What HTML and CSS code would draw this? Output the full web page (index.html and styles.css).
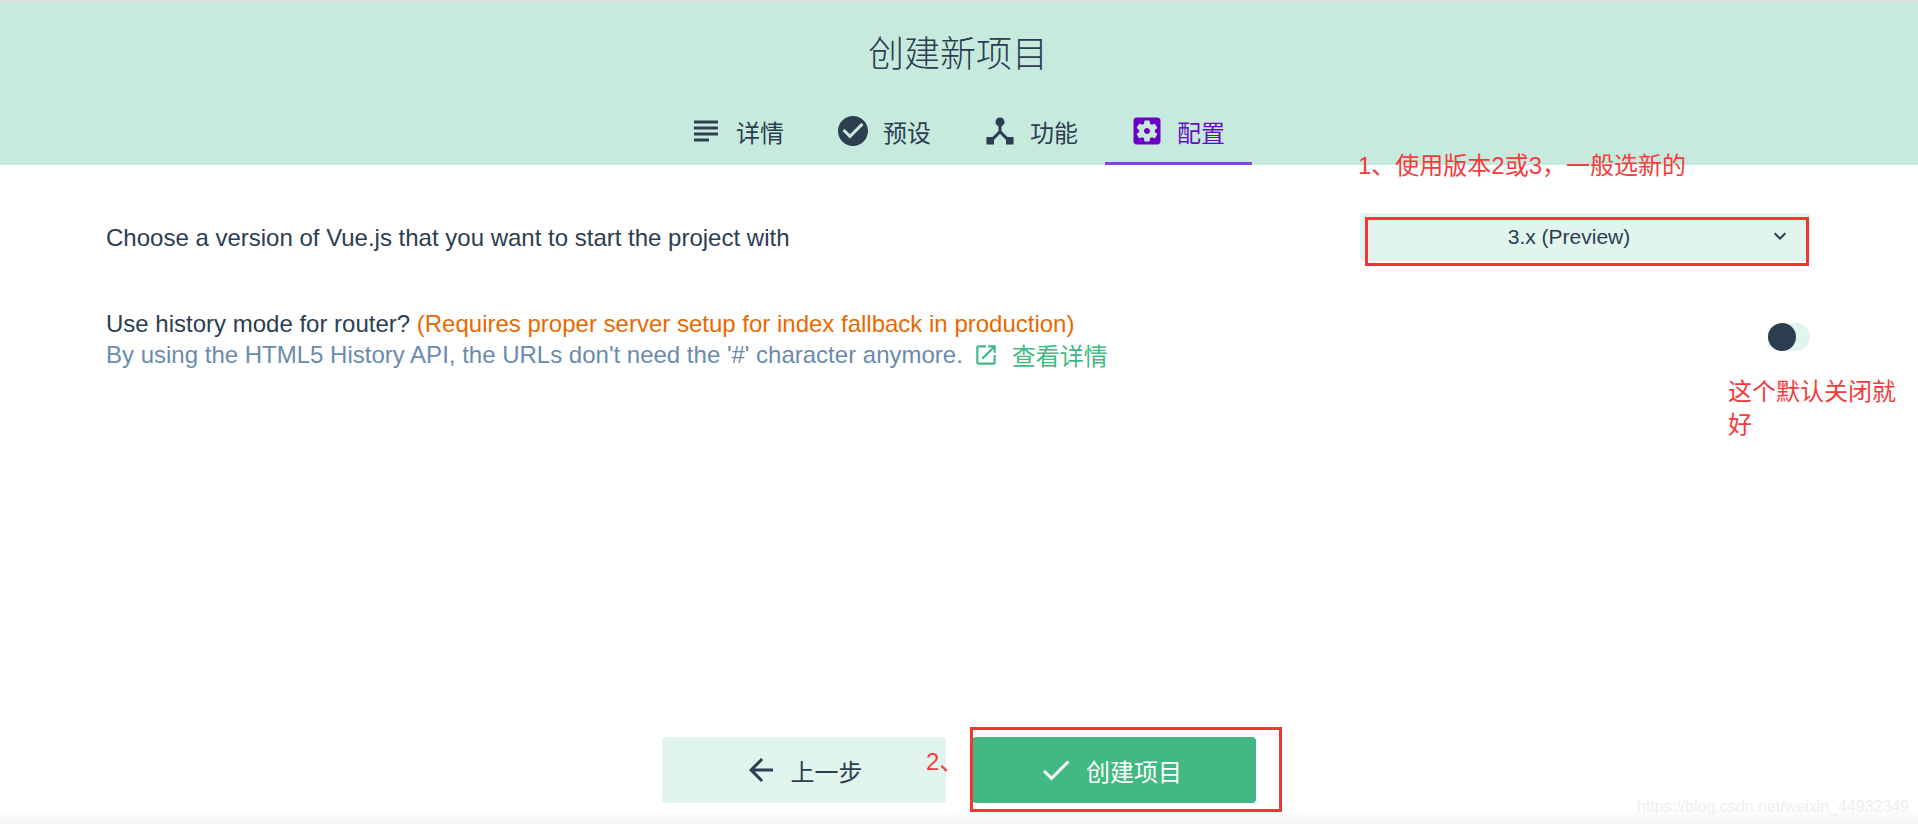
FILE: index.html
```html
<!DOCTYPE html>
<html lang="zh-CN">
<head>
    <meta charset="UTF-8">
    <title>创建新项目</title>
    <link rel="stylesheet" href="styles.css">
</head>
<body>
    <header class="top">
        <h1 class="title">创建新项目</h1>
        <nav class="tabs">
            <div class="tab">
                <svg class="tab-icon" viewBox="0 0 24 24"><path d="M14 17H4v2h10v-2zm6-8H4v2h16V9zM4 15h16v-2H4v2zM4 5v2h16V5H4z"/></svg>
                <span>详情</span>
            </div>
            <div class="tab">
                <svg class="tab-icon" viewBox="0 0 24 24"><path d="M12 2C6.48 2 2 6.48 2 12s4.48 10 10 10 10-4.48 10-10S17.52 2 12 2zm-2 15l-5-5 1.41-1.41L10 14.17l7.59-7.59L19 8l-9 9z"/></svg>
                <span>预设</span>
            </div>
            <div class="tab">
                <svg class="tab-icon" viewBox="0 0 24 24"><path d="M17 16l-4-4V8.82C14.16 8.4 15 7.3 15 6c0-1.66-1.34-3-3-3S9 4.34 9 6c0 1.3.84 2.4 2 2.82V12l-4 4H3v5h5v-3.05l4-4.2 4 4.2V21h5v-5h-4z"/></svg>
                <span>功能</span>
            </div>
            <div class="tab active">
                <svg class="tab-icon" viewBox="0 0 24 24"><path d="M12 10c-1.1 0-2 .9-2 2s.9 2 2 2 2-.9 2-2-.9-2-2-2zm7-7H5c-1.11 0-2 .9-2 2v14c0 1.1.89 2 2 2h14c1.11 0 2-.9 2-2V5c0-1.1-.89-2-2-2zm-1.75 9c0 .23-.02.46-.05.68l1.48 1.16c.13.11.17.3.08.45l-1.4 2.42c-.09.15-.27.21-.43.15l-1.74-.7c-.36.28-.76.51-1.18.69l-.26 1.85c-.03.17-.18.3-.35.3h-2.8c-.17 0-.32-.13-.35-.29l-.26-1.85c-.43-.18-.82-.41-1.18-.69l-1.74.7c-.16.06-.34 0-.43-.15l-1.4-2.42c-.09-.15-.05-.34.08-.45l1.48-1.16c-.03-.23-.05-.46-.05-.69 0-.23.02-.46.05-.68l-1.48-1.16c-.13-.11-.17-.3-.08-.45l1.4-2.42c.09-.15.27-.21.43-.15l1.74.7c.36-.28.76-.51 1.18-.69l.26-1.85c.03-.17.18-.3.35-.3h2.8c.17 0 .32.13.35.29l.26 1.85c.43.18.82.41 1.18.69l1.74-.7c.16-.06.34 0 .43.15l1.4 2.42c.09.15.05.34-.08.45l-1.48 1.16c.03.23.05.46.05.69z"/></svg>
                <span>配置</span>
            </div>
        </nav>
    </header>

    <main class="content">
        <div class="row row-version">
            <p class="prompt">Choose a version of Vue.js that you want to start the project with</p>
            <div class="select">
                <span>3.x (Preview)</span>
                <svg class="select-arrow" viewBox="0 0 24 24"><path d="M16.59 8.59L12 13.17 7.41 8.59 6 10l6 6 6-6z"/></svg>
            </div>
        </div>
        <div class="row row-history">
            <div>
                <p class="prompt">Use history mode for router? <span class="warn">(Requires proper server setup for index fallback in production)</span></p>
                <p class="desc">By using the HTML5 History API, the URLs don't need the '#' character anymore.
                    <a class="more">
                        <svg class="more-icon" viewBox="0 0 24 24"><path d="M19 19H5V5h7V3H5c-1.11 0-2 .9-2 2v14c0 1.1.89 2 2 2h14c1.1 0 2-.9 2-2v-7h-2v7zM14 3v2h3.59l-9.83 9.83 1.41 1.41L19 6.41V10h2V3h-7z"/></svg>
                        <span>查看详情</span>
                    </a>
                </p>
            </div>
            <div class="toggle"><div class="knob"></div></div>
        </div>
    </main>

    <footer class="actions">
        <button class="btn btn-prev">
            <svg class="btn-icon" viewBox="0 0 24 24"><path d="M20 11H7.83l5.59-5.59L12 4l-8 8 8 8 1.41-1.41L7.83 13H20v-2z"/></svg>
            <span>上一步</span>
        </button>
        <button class="btn btn-create">
            <svg class="btn-icon" viewBox="0 0 24 24"><path d="M9 16.2L4.8 12l-1.4 1.4L9 19 21 7l-1.4-1.4L9 16.2z"/></svg>
            <span>创建项目</span>
        </button>
    </footer>

    <!-- red notes drawn over the screenshot -->
    <div class="note note-1">1、使用版本2或3，一般选新的</div>
    <div class="note note-2">这个默认关闭就好</div>
    <div class="note note-3">2、</div>
    <div class="mark mark-select"></div>
    <div class="mark mark-create"></div>
    <div class="watermark">https://blog.csdn.net/weixin_44932349</div>
</body>
</html>
```

FILE: styles.css
```css
* {
    box-sizing: border-box;
}
html, body {
    height: 100%;
}
body {
    position: relative;
    margin: 0;
    height: 824px;
    overflow: hidden;
    display: flex;
    flex-direction: column;
    font-family: "Liberation Sans", "Noto Sans CJK SC", sans-serif;
    color: #2c3e50;
    background: #fff;
}
p {
    margin: 0;
}

.top {
    height: 165px;
    border-top: 2px solid #e0e0e0;
    background: #c7eade;
    display: flex;
    flex-direction: column;
    align-items: center;
}
.title {
    margin: 26px 2px 0 0;
    height: 47px;
    font-size: 36px;
    line-height: 47px;
    font-weight: 300;
    font-family: "Noto Sans CJK SC", sans-serif;
}
.tabs {
    display: flex;
    margin: 20px 2px 0 0;
}
.tab {
    width: 147px;
    height: 70px;
    padding: 2px 3px 0 0;
    display: flex;
    align-items: center;
    justify-content: center;
    gap: 12px;
    font-size: 24px;
    font-family: "Noto Sans CJK SC", sans-serif;
}
.tab-icon {
    width: 36px;
    height: 36px;
    fill: #2c3e50;
}
.tab.active {
    color: #6a0bc5;
    border-bottom: 3px solid #8646c8;
    padding-top: 5px;
}
.tab.active .tab-icon {
    fill: #6a00c4;
}

.content {
    flex: 1;
    padding: 48px 108px 0 106px;
}
.row {
    display: flex;
    justify-content: space-between;
}
.row-version {
    align-items: flex-start;
    height: 90px;
}
.prompt {
    font-size: 24px;
    line-height: 31px;
}
.row-version .prompt {
    margin-top: 9px;
}
.select {
    width: 450px;
    height: 48px;
    padding: 0 18px 0 10px;
    border-radius: 4px;
    background: #e2f4ee;
    display: flex;
    align-items: center;
    font-size: 21px;
}
.select span {
    flex: 1;
    text-align: center;
}
.select-arrow {
    width: 24px;
    height: 24px;
    margin-top: -2px;
    fill: #2c3e50;
}
.row-history {
    align-items: flex-start;
    padding-top: 5px;
}
.warn {
    color: #e96900;
}
.desc {
    display: flex;
    align-items: center;
    gap: 6px;
    font-size: 24px;
    line-height: 31px;
    color: #6a8bad;
}
.more {
    display: inline-flex;
    align-items: center;
    gap: 13px;
    margin-left: 4px;
    color: #42b983;
    font-family: "Noto Sans CJK SC", sans-serif;
}
.more-icon {
    width: 26px;
    height: 26px;
    fill: #42b983;
}
.toggle {
    width: 42px;
    height: 28px;
    margin-top: 15px;
    border-radius: 14px;
    background: #e2f4ee;
}
.knob {
    width: 28px;
    height: 28px;
    border-radius: 50%;
    background: #2c3e50;
}

.actions {
    display: flex;
    justify-content: center;
    gap: 26px;
    height: 87px;
    background: linear-gradient(to bottom, #fff 0, #fff 73px, #f3f3f3 87px);
}
.btn {
    width: 284px;
    height: 66px;
    padding: 0 3px 0 0;
    border: none;
    border-radius: 4px;
    display: flex;
    align-items: center;
    justify-content: center;
    gap: 12px;
    font-size: 24px;
    font-family: "Noto Sans CJK SC", sans-serif;
}
.btn-icon {
    width: 36px;
    height: 36px;
}
.btn-prev {
    background: #e2f4ee;
    color: #2c3e50;
}
.btn-prev .btn-icon {
    fill: #2c3e50;
}
.btn-create {
    padding-right: 8px;
    background: #42b983;
    color: #fff;
}
.btn-create .btn-icon {
    fill: #fff;
}

.note {
    position: absolute;
    color: #f53b3b;
    font-size: 24px;
    line-height: 33px;
    font-family: "Liberation Sans", "Noto Sans CJK SC", sans-serif;
}
.note-1 {
    left: 1358px;
    top: 149px;
}
.note-2 {
    left: 1728px;
    top: 375px;
    width: 172px;
}
.note-3 {
    left: 926px;
    top: 745px;
}
.mark {
    position: absolute;
    border: 3px solid #f53535;
}
.mark-select {
    left: 1365px;
    top: 217px;
    width: 444px;
    height: 49px;
}
.mark-create {
    left: 970px;
    top: 727px;
    width: 312px;
    height: 85px;
}
.watermark {
    position: absolute;
    left: 1637px;
    top: 798px;
    font-size: 16px;
    color: #efefef;
}
```
